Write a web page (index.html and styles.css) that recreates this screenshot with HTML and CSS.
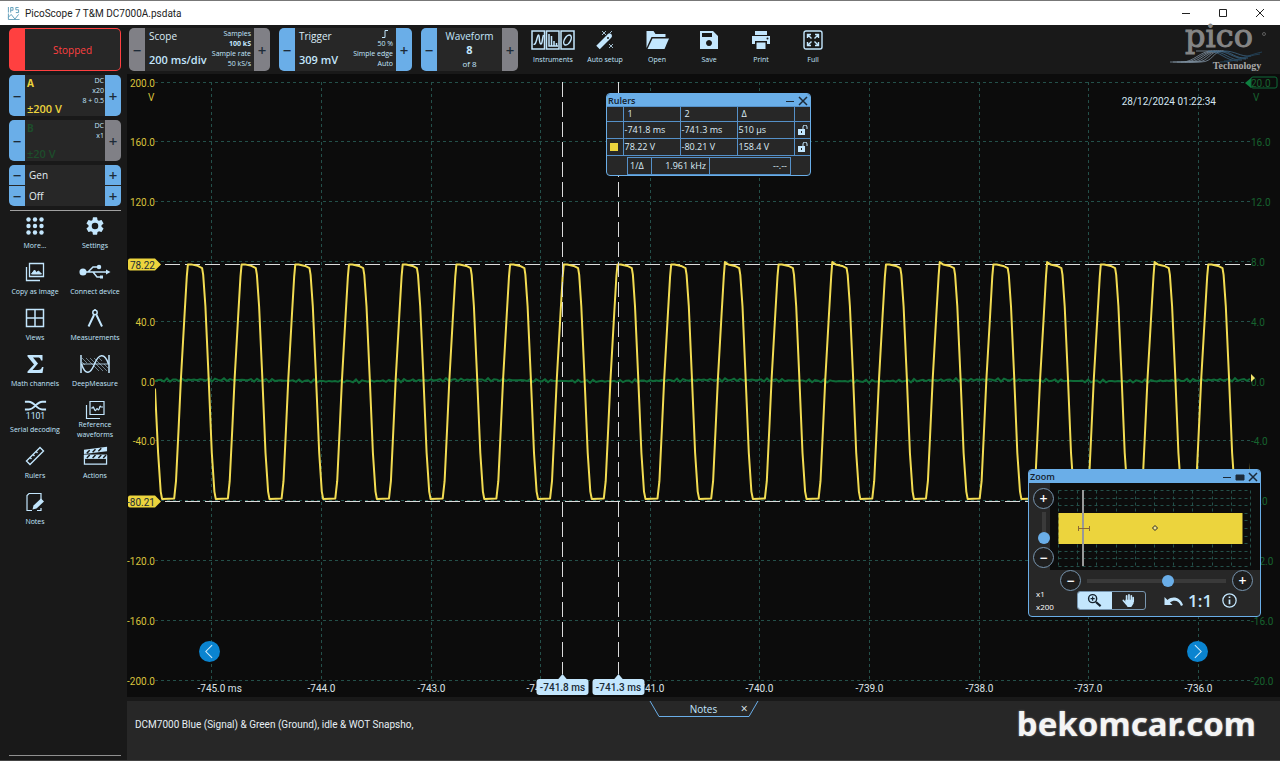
FILE: index.html
```html
<!DOCTYPE html>
<html lang="en">
  <head>
    <meta charset="UTF-8" />
    <title>PicoScope 7 T&amp;M DC7000A.psdata</title>
    <link rel="stylesheet" href="styles.css">
  </head>
  <body>
    <header class="titlebar">
      <svg class="app-icon" viewBox="0 0 14 14" fill="none" stroke="#5b9cb8">
        <path d="M1.500 0v6M4 6V.5h2.500v3H4M12.500.5H9.500v2.500h3V6h-3" />
        <path d="M1.500 7v6.500h12M1.500 11l3-3 4 5 4-5" />
      </svg>
      <h1>PicoScope 7 T&amp;M DC7000A.psdata</h1>
      <div class="window-buttons">
        <button aria-label="Minimize"><svg viewBox="0 0 10 10"><path d="M1 5.500h8" /></svg></button>
        <button aria-label="Maximize"><svg viewBox="0 0 10 10"><path d="M1.500 1.500h7v7h-7z" /></svg></button>
        <button aria-label="Close"><svg viewBox="0 0 10 10"><path d="M1 1l8 8M9 1L1 9" /></svg></button>
      </div>
    </header>

    <div class="app">
      <aside class="sidebar">
        <button class="stopped">Stopped</button>

        <section class="control channel-a">
          <button class="step" aria-label="Decrease A">−</button>
          <div class="control-body">
            <div class="control-left"><b>A</b><strong>±200 V</strong></div>
            <div class="control-right"><span>DC</span><span>x20</span><span>8 + 0.5</span></div>
          </div>
          <button class="step" aria-label="Increase A">+</button>
        </section>

        <section class="control channel-b">
          <button class="step" aria-label="Decrease B">−</button>
          <div class="control-body">
            <div class="control-left"><b>B</b><strong>±20 V</strong></div>
            <div class="control-right"><span>DC</span><span>x1</span></div>
          </div>
          <button class="step off" aria-label="Increase B">+</button>
        </section>

        <section class="generator">
          <button class="step" aria-label="Previous generator">−</button>
          <span>Gen</span>
          <button class="step" aria-label="Next generator">+</button>
          <button class="step" aria-label="Generator down">−</button>
          <span>Off</span>
          <button class="step" aria-label="Generator up">+</button>
        </section>

        <nav class="tools">
          <button>
            <svg viewBox="0 0 20 20" fill="currentColor"><circle cx="3.500" cy="3.500" r="2.200" /><circle cx="10" cy="3.500" r="2.200" /><circle cx="16.500" cy="3.500" r="2.200" /><circle cx="3.500" cy="10" r="2.200" /><circle cx="10" cy="10" r="2.200" /><circle cx="16.500" cy="10" r="2.200" /><circle cx="3.500" cy="16.500" r="2.200" /><circle cx="10" cy="16.500" r="2.200" /><circle cx="16.500" cy="16.500" r="2.200" /></svg>
            <span>More...</span>
          </button>
          <button>
            <svg viewBox="1 1 22 22" fill="currentColor"><path d="M19.140 12.940c.04-.3.06-.61.06-.94s-.02-.64-.07-.94l2.030-1.580a.49.49 0 0 0 .12-.61l-1.920-3.320a.49.49 0 0 0-.59-.22l-2.390.96a7 7 0 0 0-1.620-.94l-.36-2.540A.48.48 0 0 0 13.920 2.400h-3.840a.48.48 0 0 0-.47.41l-.36 2.540c-.59.24-1.130.57-1.620.94l-2.390-.96a.48.48 0 0 0-.59.22L2.740 8.870a.48.48 0 0 0 .12.61l2.030 1.580a6 6 0 0 0-.02 1.880l-2.030 1.580a.49.49 0 0 0-.12.61l1.920 3.320c.12.22.37.29.59.22l2.390-.96c.5.38 1.030.7 1.620.94l.36 2.540c.05.24.24.41.48.41h3.840c.24 0 .44-.17.47-.41l.36-2.540a7 7 0 0 0 1.620-.94l2.390.96c.22.08.47 0 .59-.22l1.920-3.320a.48.48 0 0 0-.12-.61zM12 15.600a3.600 3.600 0 1 1 0-7.200 3.600 3.600 0 0 1 0 7.200z" /></svg>
            <span>Settings</span>
          </button>
          <button>
            <svg viewBox="0 0 20 20" fill="none" stroke="currentColor"><path d="M4.500 1.500h14v13h-14zM1.500 5v13.500H15" stroke-width="1.300" /><path d="M6.500 12l3-4 2 2.500 2-1.500 3 3z" fill="currentColor" /></svg>
            <span>Copy as image</span>
          </button>
          <button>
            <svg class="wide" viewBox="0 0 32 20" fill="none" stroke="currentColor" stroke-width="1.500"><circle cx="4" cy="10" r="2.800" fill="currentColor" /><path d="M4 10h24M9 10l5-5h5M14 10l4 5h4" /><path d="M27 7.500l4.500 2.500-4.500 2.500z" fill="currentColor" stroke="none" /><circle cx="20" cy="5" r="1.500" fill="currentColor" /><path d="M21 13.500h3v3h-3z" fill="currentColor" stroke="none" /></svg>
            <span>Connect device</span>
          </button>
          <button>
            <svg viewBox="0 0 20 20" fill="none" stroke="currentColor" stroke-width="1.500"><path d="M1.500 1.500h17v17h-17zM10 1.500v17M1.500 10h17" /></svg>
            <span>Views</span>
          </button>
          <button>
            <svg viewBox="0 0 20 20" fill="none" stroke="currentColor" stroke-width="2"><circle cx="10" cy="4.500" r="2.200" stroke-width="1.500" /><path d="M10 1v1.500" stroke-width="1.500" /><path d="M9 7L3.500 18.500M11.500 7l5.500 11.500" /></svg>
            <span>Measurements</span>
          </button>
          <button>
            <svg viewBox="0 0 20 20" fill="currentColor"><path d="M2.500 1h15v5.500H16C15.500 4 14.500 3.500 12.500 3.500H8l5 6-5.500 6.500H13c2.500 0 3.500-1 4-3h1.500L17.500 19h-15v-1.500L9 10.500 2.500 2.500z" /></svg>
            <span>Math channels</span>
          </button>
          <button>
            <svg class="wide" viewBox="0 0 32 20" fill="none" stroke="currentColor"><path d="M2 1v18M30 1v18" stroke-width="1.500" /><path d="M2 10h28" stroke-width=".8" /><path d="M2.500 10c4 12 9 10 13 0s10-12 14 0" stroke-width="1.500" /><path d="M3 4l5 5M7 4l13 13M11 4l13 13M15 4l13 13M25 10l4 4M20 4l3 3M3 8l3 3" stroke-width=".5" /></svg>
            <span>DeepMeasure</span>
          </button>
          <button>
            <svg class="mid" viewBox="0 0 26 20" fill="none" stroke="currentColor"><path d="M2 1.500h4c6 0 8 8 14 8h4M2 9.500h4c6 0 8-8 14-8h4" stroke-width="2" /><text x="13" y="19" text-anchor="middle" class="bits">1101</text></svg>
            <span>Serial decoding</span>
          </button>
          <button>
            <svg viewBox="0 0 20 20" fill="none" stroke="currentColor"><path d="M5 1.500h14v13H5zM1.500 5v13.500H15" stroke-width="1.200" /><path d="M6 8h1.500C8.500 4 9.500 13 11 10s1.500 0 2.500 0S14.500 4 16 7h2" stroke-width="1.200" /></svg>
            <span>Reference waveforms</span>
          </button>
          <button>
            <svg viewBox="0 0 20 20" fill="none" stroke="currentColor" stroke-width="1.400"><path d="M1.500 15L15 1.500l3.500 3.500L5 18.500zM5 11.500l1.500 1.500M8 8.500l1.500 1.500M11 5.500l1.500 1.500" /></svg>
            <span>Rulers</span>
          </button>
          <button>
            <svg class="mid" viewBox="0 0 26 20"><path d="M1.500 9.500h23v9h-23z" fill="none" stroke="currentColor" stroke-width="1.300" /><path d="M1 3.500L25 .5v4.500L1 8z" fill="currentColor" /><path d="M4 7l3-3M10 6l3-3M16 5l3-3" stroke="#191919" stroke-width="1.500" /><path d="M1 8.500h24V13H1z" fill="currentColor" /><path d="M4 12l3-3M10 12l3-3M16 12l3-3M21 12l3-3" stroke="#191919" stroke-width="1.500" /></svg>
            <span>Actions</span>
          </button>
          <button>
            <svg viewBox="0 0 20 20" fill="none" stroke="currentColor"><path d="M16 8V1.500H4L2 3.500v15h5M12 18.500h4V16" stroke-width="1.200" /><path d="M7.500 17.500l1-4 7.500-7 3 3-7.500 7z" fill="currentColor" stroke="none" /></svg>
            <span>Notes</span>
          </button>
        </nav>
      </aside>

      <main class="main">
        <div class="toolbar">
          <section class="control scope">
            <button class="step off" aria-label="Decrease timebase">−</button>
            <div class="control-body">
              <div class="control-left"><span>Scope</span><strong>200 ms/div</strong></div>
              <div class="control-right"><span>Samples</span><b>100 kS</b><span>Sample rate</span><span>50 kS/s</span></div>
            </div>
            <button class="step off" aria-label="Increase timebase">+</button>
          </section>

          <section class="control trigger">
            <button class="step" aria-label="Decrease trigger">−</button>
            <div class="control-body">
              <div class="control-left"><span>Trigger</span><strong>309 mV</strong></div>
              <div class="control-right">
                <svg viewBox="0 0 8 8" width="8" height="8" fill="none" stroke="currentColor"><path d="M1 7.500h3v-7h3" /></svg>
                <span>50 %</span><span>Simple edge</span><span>Auto</span>
              </div>
            </div>
            <button class="step" aria-label="Increase trigger">+</button>
          </section>

          <section class="control waveform">
            <button class="step" aria-label="Previous waveform">−</button>
            <div class="control-body centered">
              <span>Waveform</span><strong>8</strong><small>of 8</small>
            </div>
            <button class="step off" aria-label="Next waveform">+</button>
          </section>

          <nav class="actions">
            <button>
              <svg class="instruments" viewBox="0 0 44 20" fill="none" stroke="currentColor" stroke-width="1.500"><path d="M1 1h12.500v18H1zM15.500 1H28v18H15.500zM30 1h13v18H30z" /><path d="M2.500 14c3 2 3.500-9 5-9s0 9 2.500 9c1.500 0 1-5 2.500-9M18 4v12h9M20.500 16V6M23 16v-5M25.500 16v-3" /><ellipse cx="36.500" cy="10" rx="3" ry="5.500" transform="rotate(30 36.500 10)" /></svg>
              <span>Instruments</span>
            </button>
            <button>
              <svg viewBox="0 0 20 20" fill="none" stroke="currentColor"><path d="M3 17.500L12.500 8" stroke-width="5" /><path d="M13 7.500l1.500-1.500" stroke-width="5" stroke-linecap="round" /><circle cx="13" cy="8" r="1" fill="#191919" stroke="none" /><path d="M7 1l4 4M11 1L7 5M14 14l4 4M18 14l-4 4M15 3l2-2" stroke-width=".8" /></svg>
              <span>Auto setup</span>
            </button>
            <button>
              <svg class="mid" viewBox="0 0 24 20" fill="currentColor"><path d="M1 18V1h7l2 3h10v3H6z" /><path d="M7 8.500h16.500L19 19H2z" /></svg>
              <span>Open</span>
            </button>
            <button>
              <svg viewBox="0 0 20 20" fill="currentColor" fill-rule="evenodd"><path d="M1 1h13l5 5v13H1zM3 3v4h10V3zM10 10a3 3 0 1 0 .01 0z" /></svg>
              <span>Save</span>
            </button>
            <button>
              <svg viewBox="0 0 20 20" fill="currentColor"><path d="M4 1h12v4H4zM1 6h18v8h-3v-3H4v3H1zM5.500 12.500h9V19h-9z" /><circle cx="16.500" cy="8.500" r="1" fill="#191919" /></svg>
              <span>Print</span>
            </button>
            <button>
              <svg viewBox="0 0 20 20" fill="none" stroke="currentColor" stroke-width="1.400"><rect x="1" y="1" width="18" height="18" rx="2" /><path d="M4.500 8V4.500H8M12 4.500h3.500V8M4.500 12v3.500H8M12 15.500h3.500V12M4.500 4.500l4 4M15.500 4.500l-4 4M4.500 15.500l4-4M15.500 15.500l-4-4" /></svg>
              <span>Full</span>
            </button>
          </nav>

          <svg class="logo" viewBox="0 0 100 46" role="img" aria-label="pico Technology">
            <g fill="none" stroke="#7d8fa0" stroke-width=".8">
              <path d="M2 37h12c12 0 18-11 30-11M5 37h12c12 0 18-11 30-11M9 37h12c12 0 16-11 28-11M13 37h12c12 0 14-11 26-11M17 37h12c12 0 12-11 24-11M21 37h12c12 0 12-11 22-11M28 26h28" />
              <path d="M40 26c12 0 18 10 30 10M44 26c12 0 18 10 30 9M48 26c12 0 18 8 30 8M52 26c12 0 14 8 28 7M56 26c12 0 16 6 27 5" stroke="#3c6484" />
              <path d="M56 36c14 0 24-6 38-9M52 37c16 0 26-6 40-8" stroke="#24465f" />
            </g>
            <text x="51" y="22" text-anchor="middle" class="logo-name">pico</text>
            <circle cx="96" cy="9" r="1.500" fill="none" stroke="#888" stroke-width=".6" />
            <text x="69" y="44" text-anchor="middle" class="logo-sub">Technology</text>
          </svg>
        </div>

        <div class="chart" id="chart">
          <svg id="plot" class="plot"></svg>
          <time class="stamp">28/12/2024 01:22:34</time>

          <button class="page-btn prev" aria-label="Previous"><svg viewBox="0 0 20 20"><path d="M12.500 4L6.500 10l6 6" /></svg></button>
          <button class="page-btn next" aria-label="Next"><svg viewBox="0 0 20 20"><path d="M7.500 4l6 6-6 6" /></svg></button>

          <section class="panel rulers">
            <header class="panel-title">
              <h2>Rulers</h2>
              <button aria-label="Minimize rulers"><svg viewBox="0 0 10 10"><path d="M1 5.500h8" /></svg></button>
              <button aria-label="Close rulers"><svg viewBox="0 0 10 10"><path d="M1 1l8 8M9 1L1 9" stroke-width="1.500" /></svg></button>
            </header>
            <table class="ruler-table">
              <colgroup><col class="c-icon"><col><col><col><col class="c-icon"></colgroup>
              <tr><td></td><th scope="col">1</th><th scope="col">2</th><th scope="col">Δ</th><td></td></tr>
              <tr>
                <td></td><td>-741.8 ms</td><td>-741.3 ms</td><td>510 µs</td>
                <td><svg class="lock" viewBox="0 0 10 10"><path d="M0 4h7v6H0z" fill="#c3e6fd" /><path d="M5 4V2a2 2 0 0 1 4 0v2" fill="none" stroke="#c3e6fd" /><path d="M3.500 6v2" stroke="#222" /></svg></td>
              </tr>
              <tr>
                <td><i class="swatch"></i></td><td>78.22 V</td><td>-80.21 V</td><td>158.4 V</td>
                <td><svg class="lock" viewBox="0 0 10 10"><path d="M0 4h7v6H0z" fill="#c3e6fd" /><path d="M5 4V2a2 2 0 0 1 4 0v2" fill="none" stroke="#c3e6fd" /><path d="M3.500 6v2" stroke="#222" /></svg></td>
              </tr>
            </table>
            <table class="freq-table">
              <colgroup><col class="f-name"><col class="f-value"><col></colgroup>
              <tr><th scope="row">1/Δ</th><td>1.961 kHz</td><td>--.--</td></tr>
            </table>
          </section>

          <section class="panel zoom">
            <header class="panel-title">
              <h2>Zoom</h2>
              <button aria-label="Minimize zoom"><svg viewBox="0 0 10 10"><path d="M1 5.500h8" /></svg></button>
              <button aria-label="Dock zoom"><svg viewBox="0 0 10 10"><path d="M1 3h8v5H1z" fill="#1c2a38" /></svg></button>
              <button aria-label="Close zoom"><svg viewBox="0 0 10 10"><path d="M1 1l8 8M9 1L1 9" stroke-width="1.500" /></svg></button>
            </header>
            <div class="zoom-top">
              <div class="zoom-vertical">
                <button class="round" aria-label="Zoom in vertically">+</button>
                <input class="slider-v" type="range" min="0" max="100" value="0" aria-label="Vertical zoom">
                <button class="round" aria-label="Zoom out vertically">−</button>
              </div>
              <svg class="overview" id="overview"></svg>
            </div>
            <div class="zoom-bottom">
              <div class="factors"><span>x1</span><span>x200</span></div>
              <div class="zoom-tools">
                <div class="zoom-horizontal">
                  <button class="round" aria-label="Zoom out horizontally">−</button>
                  <input class="slider-h" type="range" min="0" max="100" value="59" aria-label="Horizontal zoom">
                  <button class="round" aria-label="Zoom in horizontally">+</button>
                </div>
                <div class="zoom-modes">
                  <div class="segmented">
                    <button class="active" aria-label="Zoom tool"><svg viewBox="0 0 16 16" fill="none" stroke="#14202b" stroke-width="1.500"><circle cx="6" cy="6" r="4.300" /><path d="M6 3.800v4.400M3.800 6h4.400" stroke-width="1.200" /><path d="M9.500 9.500l5 4.500" stroke-width="2.200" /></svg></button>
                    <button aria-label="Pan tool"><svg viewBox="0 0 16 16" fill="none" stroke="#c3e6fd" stroke-width="1.800" stroke-linecap="round"><path d="M6 9V3M8.500 9V2M11 9V3M13 9V5M2.500 8l3 3.500" /><path d="M5.500 8h7v3l-2 3H7.500l-2-3z" fill="#c3e6fd" /></svg></button>
                  </div>
                  <button class="plain undo" aria-label="Undo zoom"><svg viewBox="0 0 20 14"><path d="M1 3v8h8L6.500 8.500c4-3 9-2 11 3.500l2-1C17 3.500 9.500 1.500 4 6z" fill="#c3e6fd" /></svg></button>
                  <button class="plain one">1:1</button>
                  <button class="plain info" aria-label="Information"><svg viewBox="0 0 14 14" fill="none" stroke="#c3e6fd"><circle cx="7" cy="7" r="6.200" stroke-width="1.200" /><path d="M7 6v4.500M7 3.200v1.500" stroke-width="1.600" /></svg></button>
                </div>
              </div>
            </div>
          </section>
        </div>

        <section class="notes">
          <div class="notes-tab">
            <svg viewBox="0 0 110 17" fill="none" stroke="#6aaee8"><path d="M1 0l9 15.500h90L109 0" /></svg>
            <h2>Notes</h2>
            <button aria-label="Close notes">×</button>
          </div>
          <p>DCM7000 Blue (Signal) &amp; Green (Ground), idle &amp; WOT Snapsho,</p>
          <a class="watermark" href="#">bekomcar.com</a>
        </section>
      </main>
    </div>
    <script src="script.js"></script>
  </body>
</html>
```
FILE: styles.css
```css
* {
  box-sizing: border-box;
}

body {
  margin: 0;
  height: 100vh;
  min-height: 640px;
  display: flex;
  flex-direction: column;
  background-color: #191919;
  color: #c3e6fd;
  font-family: "Open Sans", "Noto Sans", sans-serif;
  font-size: 10px;
  overflow: hidden;
}

button {
  font-family: inherit;
  color: inherit;
  border: none;
  padding: 0;
  background: none;
  cursor: pointer;
}

h1,
h2,
p {
  margin: 0;
  font-weight: normal;
}

/* title bar */
.titlebar {
  height: 25px;
  display: flex;
  align-items: center;
  padding: 0 2px 0 7px;
  background-color: white;
  border-top: 1px solid #777;
  color: #222;
}

.app-icon {
  width: 13px;
  height: 13px;
  margin-right: 5px;
}

.titlebar h1 {
  font-family: Roboto, sans-serif;
  font-size: 10px;
  flex: 1;
}

.window-buttons {
  display: flex;
}

.window-buttons button {
  width: 37px;
  height: 24px;
}

.window-buttons svg {
  width: 10px;
  height: 10px;
  fill: none;
  stroke: #222;
}

.app {
  flex: 1;
  display: flex;
  min-height: 0;
  border-bottom: 1px solid #444;
}

/* sidebar */
.sidebar {
  width: 127px;
  padding: 3px 6px 4px 9px;
  display: flex;
  flex-direction: column;
  gap: 4px;
}

.stopped {
  height: 43px;
  color: #ff4040;
  font-size: 10px;
  background-color: #272727;
  border: 1px solid #ff4040;
  border-left-width: 16px;
  border-radius: 5px;
}

.control {
  display: flex;
  background-color: #272727;
  border-radius: 5px;
  overflow: hidden;
}

.sidebar .control {
  height: 41px;
}

.step {
  width: 16px;
  flex: none;
  background-color: #6aaee8;
  color: #1d2b38;
  font-size: 15px;
  font-weight: 600;
  line-height: 20px;
}

.step.off {
  background-color: #808086;
}

.control-body {
  flex: 1;
  display: flex;
  justify-content: space-between;
}

.control-left {
  display: flex;
  flex-direction: column;
  justify-content: space-between;
  padding: 1px 0 0 2px;
  line-height: 14px;
}

.control-left strong {
  font-size: 11px;
  font-weight: 600;
}

.control-right {
  display: flex;
  flex-direction: column;
  align-items: flex-end;
  padding: 1px 1px 0 0;
  font-size: 7px;
  line-height: 10px;
}

.channel-a .control-left {
  color: #ecd43d;
}

.channel-b .control-left {
  color: #1d4d2b;
}

.generator {
  display: grid;
  grid-template-columns: 16px 1fr 16px;
  grid-auto-rows: 20px;
  row-gap: 1px;
  align-items: stretch;
  border-radius: 5px;
  overflow: hidden;
  background-color: #272727;
  color: #e4eef5;
}

.generator span {
  padding-left: 4px;
  line-height: 20px;
}

.tools {
  display: grid;
  grid-template-columns: 60px 60px;
  grid-auto-rows: 45px;
  row-gap: 1px;
  margin: 0 -4px;
  padding-top: 2px;
  position: relative;
  flex: 1;
  align-content: start;
}

.sidebar::after {
  content: "";
  border-top: 1px solid #909090;
}

.tools::before {
  content: "";
  position: absolute;
  top: 0;
  left: 5px;
  right: 4px;
  border-top: 1px solid #a0a0a0;
}

.tools button,
.actions button {
  display: flex;
  flex-direction: column;
  align-items: center;
  font-size: 7px;
  line-height: 10px;
}

.tools button {
  padding-top: 4px;
}

.tools svg,
.actions svg {
  height: 20px;
  width: 20px;
}

.tools svg.wide {
  width: 32px;
}

.tools svg.mid,
.actions svg.mid {
  width: 25px;
}

.tools span {
  height: 20px;
  max-width: 56px;
  display: flex;
  align-items: center;
  justify-content: center;
  white-space: normal;
}

.bits {
  font-family: Roboto, sans-serif;
  font-size: 9px;
  fill: currentColor;
  stroke: none;
}

/* toolbar */
.main {
  flex: 1;
  min-width: 0;
  display: flex;
  flex-direction: column;
}

.toolbar {
  height: 49px;
  display: flex;
  gap: 9px;
  padding: 0 12px 3px 2px;
}

.toolbar .control,
.actions {
  margin-top: 3px;
}

.toolbar .control-left {
  padding: 1px 0 4px 4px;
  color: #dcecf6;
}

.toolbar .control-left strong,
.centered strong {
  color: #c3e6fd;
}

.scope {
  width: 141px;
}

.trigger {
  width: 133px;
}

.waveform {
  width: 97px;
}

.toolbar .control-right {
  padding-right: 3px;
}

.scope .control-body {
  white-space: nowrap;
}

.toolbar .control-right svg {
  margin: 1px 4px 1px 0;
}

.centered {
  flex-direction: column;
  align-items: center;
  justify-content: center;
  line-height: 14px;
}

.centered strong {
  font-size: 11px;
}

.centered small {
  font-size: 8px;
}

.actions {
  display: flex;
  flex: 1;
}

.actions button {
  width: 52px;
  padding-top: 2px;
  gap: 5px;
}

.actions svg.instruments {
  width: 44px;
}

.logo {
  width: 100px;
  height: 46px;
  flex: none;
}

.logo-name {
  font-family: "DejaVu Serif", serif;
  font-size: 32px;
  fill: #858585;
  stroke: #858585;
}

.logo-sub {
  font-family: "Liberation Serif", serif;
  font-weight: bold;
  font-size: 10px;
  fill: #a8a8a8;
}

.logo text {
  line-height: 1;
}

.logo {
  overflow: visible;
}

/* chart */
.chart {
  position: relative;
  flex: 1;
  min-height: 0;
  background-color: #0c0c0c;
  font-family: Roboto, sans-serif;
}

.plot {
  display: block;
  width: 100%;
  height: 100%;
}

.plot text {
  font-size: 10px;
}

.grid {
  stroke: #24504a;
  stroke-dasharray: 3 3;
}

.label-a {
  fill: #d9c33c;
}

.label-b {
  fill: #17632f;
}

.label-x {
  fill: #dfe4e8;
}

.trace-a {
  fill: none;
  stroke: #f2dc52;
  stroke-width: 2;
  stroke-linejoin: round;
}

.trace-b {
  fill: none;
  stroke: #0e6b38;
  stroke-width: 2;
}

.ruler {
  stroke: #dcdcdc;
  stroke-dasharray: 15 5;
}

.flag-a {
  fill: #ecd43d;
}

.flag-x {
  fill: #c3e6fd;
}

.flag-b {
  fill: none;
  stroke: #0e6b38;
}

.flag-b-arrow {
  fill: #0e8040;
}

.flag-text {
  fill: #1a2a36;
}

.flag-time {
  font-weight: 500;
}

.stamp {
  position: absolute;
  top: 21px;
  right: 64px;
  font-size: 10px;
  line-height: 14px;
  color: #d3e6f2;
}

.page-btn {
  position: absolute;
  bottom: 35px;
  width: 21px;
  height: 21px;
  border-radius: 50%;
  background-color: #0a84d0;
}

.page-btn svg {
  display: block;
  width: 21px;
  height: 21px;
  fill: none;
  stroke: #d3ecfb;
}

.prev {
  left: 72px;
}

.next {
  right: 72px;
}

/* floating panels */
.panel {
  position: absolute;
  background-color: #272727;
  border: 1px solid #6aaee8;
  border-radius: 4px;
  overflow: hidden;
  font-family: "Open Sans", "Noto Sans", sans-serif;
}

.panel-title {
  height: 13px;
  display: flex;
  align-items: center;
  gap: 3px;
  padding: 0 2px 0 1px;
  background-color: #6aaee8;
  color: #14202b;
}

.panel-title h2 {
  flex: 1;
  font-size: 9px;
  font-weight: 600;
  line-height: 13px;
}

.panel-title button,
.panel-title svg {
  display: block;
  width: 10px;
  height: 10px;
  fill: none;
  stroke: #1c2a38;
}

.rulers {
  top: 19px;
  left: 479px;
  width: 205px;
  font-size: 9px;
  color: #dcecf6;
}

.rulers table {
  border-collapse: collapse;
  table-layout: fixed;
}

.ruler-table {
  width: 100%;
  margin-top: -1px;
}

.rulers td,
.rulers th {
  border: 1px solid #5590c8;
  padding: 0 0 0 1px;
  height: 17px;
  line-height: 14px;
  font-weight: normal;
  text-align: left;
  white-space: nowrap;
}

.rulers .ruler-table th {
  height: 15px;
  padding-left: 4px;
}

.rulers .ruler-table tr:first-child td {
  height: 15px;
}

.ruler-table tr > :first-child {
  border-left: none;
}

.ruler-table tr > :last-child {
  border-right: none;
}

.rulers .ruler-table td:last-child {
  padding-left: 3px;
}

.c-icon {
  width: 16px;
}

.swatch {
  display: block;
  width: 8px;
  height: 8px;
  margin-left: 2px;
  background-color: #ecd43d;
}

.lock {
  display: block;
  width: 10px;
  height: 10px;
}

.freq-table {
  width: 164px;
  margin: 1px 0 0 20px;
}

.rulers .freq-table th {
  padding-left: 2px;
}

.rulers .freq-table td {
  text-align: right;
  padding-right: 3px;
}

.f-name {
  width: 24px;
}

.f-value {
  width: 58px;
}

.zoom {
  right: 19px;
  bottom: 80px;
  width: 233px;
}

.zoom-top {
  display: flex;
}

.zoom-vertical {
  width: 21px;
  height: 87px;
  padding: 5px 0 2px 4px;
  display: flex;
  flex-direction: column;
  gap: 3px;
}

.round {
  width: 21px;
  height: 21px;
  flex: none;
  border: 1px solid #7896b0;
  border-radius: 50%;
  background-color: #1e1e1e;
  color: white;
  font-size: 14px;
  font-weight: 600;
  line-height: 16px;
}

.zoom-vertical .round {
  position: relative;
}

.overview {
  flex: 1;
  height: 87px;
  background-color: #0c0c0c;
}

input[type="range"] {
  appearance: none;
  background: none;
  margin: 0;
}

input::-webkit-slider-thumb {
  appearance: none;
  width: 12px;
  height: 12px;
  border-radius: 50%;
  background-color: #6aaee8;
}

.slider-v {
  writing-mode: vertical-lr;
  direction: rtl;
  width: 21px;
  flex: 1;
  min-height: 0;
}

.slider-v::-webkit-slider-runnable-track {
  width: 12px;
  background: linear-gradient(90deg, transparent 4px, #3a3a3a 4px 8px, transparent 8px);
}

.slider-h {
  flex: 1;
  min-width: 0;
}

.slider-h::-webkit-slider-runnable-track {
  height: 12px;
  background: linear-gradient(transparent 4px, #3a3a3a 4px 8px, transparent 8px);
}

.zoom-bottom {
  display: flex;
  height: 46px;
}

.factors {
  width: 31px;
  padding: 17px 0 0 7px;
  display: flex;
  flex-direction: column;
  font-size: 8px;
  line-height: 13px;
  color: white;
}

.zoom-tools {
  flex: 1;
  padding-right: 7px;
}

.zoom-horizontal {
  display: flex;
  gap: 6px;
  height: 21px;
}

.zoom-modes {
  display: flex;
  align-items: center;
  padding-left: 17px;
}

.segmented {
  display: flex;
  width: 69px;
  height: 19px;
  border: 1px solid #7896b0;
  border-radius: 3px;
  overflow: hidden;
}

.segmented button {
  flex: 1;
}

.segmented .active {
  background-color: #c3e6fd;
}

.segmented svg {
  display: block;
  width: 15px;
  height: 15px;
  margin: 0 auto;
}

.plain svg {
  display: block;
}

.undo {
  margin-left: 17px;
}

.undo svg {
  width: 21px;
  height: 14px;
}

.one {
  margin-left: 4px;
  font-size: 17px;
  font-weight: 600;
  line-height: 19px;
}

.info {
  margin-left: auto;
  margin-right: 16px;
}

.info svg {
  width: 15px;
  height: 15px;
}

/* notes */
.notes {
  position: relative;
  height: 59px;
  margin-top: 4px;
  display: flex;
  align-items: center;
  padding: 0 24px 0 8px;
  background-color: #272727;
  color: #e6eef4;
}

.notes p {
  flex: 1;
  padding-bottom: 12px;
  font-family: Roboto, sans-serif;
}

.notes-tab {
  position: absolute;
  top: 0;
  left: calc(50% - 55px);
  width: 110px;
  height: 17px;
  text-align: center;
}

.notes-tab svg {
  position: absolute;
  left: 0;
  width: 110px;
  height: 17px;
}

.notes-tab h2 {
  font-size: 10px;
  line-height: 17px;
  color: #c3e6fd;
}

.notes-tab button {
  position: absolute;
  top: 0;
  right: 11px;
  font-size: 12px;
  line-height: 16px;
}

.watermark {
  color: #f4f4f4;
  font-family: "Noto Sans", sans-serif;
  font-size: 33px;
  font-weight: bold;
  line-height: 40px;
  padding-bottom: 14px;
  text-decoration: none;
  text-shadow: 0 0 2px #999;
}
```
FILE: script.js
```js
const SVG_NS = "http://www.w3.org/2000/svg";

function add(parent, name, attrs, text) {
  const el = document.createElementNS(SVG_NS, name);
  for (const key in attrs) el.setAttribute(key, attrs[key]);
  if (text !== undefined) el.textContent = text;
  parent.appendChild(el);
  return el;
}

function line(parent, cls, x1, y1, x2, y2) {
  return add(parent, "line", { class: cls, x1, y1, x2, y2 });
}

const T_MIN = -745.515;
const T_MAX = -735.515;
const PERIOD = 0.49;
const FIRST_PEAK = -745.155;

// one cycle of channel A: [ms from peak, volts]
const CYCLE = [
  [-0.06, 78], [-0.03, 78], [0.03, 77], [0.07, 75.5], [0.08, 71],
  [0.1, 50], [0.13, 1], [0.158, -48], [0.182, -74], [0.195, -79],
  [0.305, -78.5], [0.322, -67], [0.345, -32], [0.365, 0], [0.4, 45], [0.42, 70],
];

function drawPlot() {
  const svg = document.getElementById("plot");
  svg.replaceChildren();
  const w = svg.clientWidth;
  const h = svg.clientHeight;
  const left = 28;
  const right = w - 29;
  const top = 8;
  const bottom = h - 17;

  const px = (t) => left + ((t - T_MIN) / (T_MAX - T_MIN)) * (right - left);
  const py = (v) => top + ((200 - v) / 400) * (bottom - top);

  // grid and axis labels
  for (let v = 200; v >= -200; v -= 40) {
    const y = Math.floor(py(v)) + 0.5;
    line(svg, "grid", left, y, right, y);
    if (v !== 80 && v !== -80) {
      add(svg, "text", { class: "label-a", x: left, y: y + 4, "text-anchor": "end" }, v.toFixed(1));
    }
    add(svg, "text", { class: "label-b", x: right, y: y + 4 }, (v / 10).toFixed(1));
  }
  for (let t = -745; t <= -736; t++) {
    const x = Math.round(px(t)) + 0.5;
    line(svg, "grid", x, top, x, bottom);
    const label = t.toFixed(1) + (t === -745 ? " ms" : "");
    add(svg, "text", { class: "label-x", x: x - 14, y: bottom + 12 }, label);
  }
  add(svg, "text", { class: "label-a", x: left - 7, y: top + 19 }, "V");
  add(svg, "text", { class: "label-b", x: right + 2, y: top + 19 }, "V");
  add(svg, "path", { class: "flag-b-arrow", d: `M${right - 6} ${top + 1}l6 -5v10z` });
  add(svg, "rect", { class: "flag-b", x: right, y: top - 5, width: 26, height: 11, rx: 2 });

  // channel B noise
  let d = "";
  for (let x = left; x <= right; x += 3) {
    const n = Math.sin(x * 1.7) * Math.sin(x * 0.37) * 1.5 + Math.sin(x * 0.9) - 0.5;
    d += (d ? "L" : "M") + x + " " + (py(0) + n).toFixed(1);
  }
  add(svg, "path", { class: "trace-b", d });

  // horizontal rulers
  const yTop = Math.round(py(78.22)) + 0.5;
  const yBottom = Math.round(py(-80.21)) + 0.5;
  line(svg, "ruler", left + 10, yTop, right, yTop);
  line(svg, "ruler", left + 10, yBottom, right, yBottom);

  // channel A
  const clip = add(svg, "clipPath", { id: "plot-area" });
  add(clip, "rect", { x: left, y: top, width: right - left - 1, height: bottom - top });
  const points = [px(T_MIN) + "," + py(-5)];
  for (let i = -1; i < 21; i++) {
    CYCLE.forEach(([dt, v], j) => {
      const t = FIRST_PEAK + i * PERIOD + dt;
      if (t < T_MIN + 0.01) return;
      const bump = j === 0 && i > 9 && i % 2 === 0 ? 1.5 : 0;
      points.push(px(t).toFixed(1) + "," + py(v + bump).toFixed(1));
    });
  }
  add(svg, "polyline", { class: "trace-a", points: points.join(" "), "clip-path": "url(#plot-area)" });
  add(svg, "path", { fill: "#f2e36a", d: `M${right} ${py(0) - 7}l4 4l-4 4z` });

  // value flags on the left axis
  [[yTop, "78.22"], [yBottom, "-80.21"]].forEach(([y, text]) => {
    add(svg, "path", { class: "flag-a", d: `M3 ${y - 6}H28l6 6l-6 6H3q-2 0 -2 -2v-8q0 -2 2 -2z` });
    add(svg, "text", { class: "flag-text", x: 28, y: y + 4, "text-anchor": "end" }, text);
  });

  // time rulers
  [[-741.805, "-741.8 ms"], [-741.295, "-741.3 ms"]].forEach(([t, text]) => {
    const x = Math.round(px(t)) + 0.5;
    line(svg, "ruler", x, top, x, bottom - 6);
    add(svg, "path", { class: "flag-x", d: `M${x - 5} ${bottom}l5 -6l5 6z` });
    add(svg, "rect", { class: "flag-x", x: x - 26, y: bottom - 1, width: 52, height: 16, rx: 3 });
    add(svg, "text", { class: "flag-text flag-time", x, y: bottom + 11, "text-anchor": "middle" }, text);
  });
}

function drawOverview() {
  const svg = document.getElementById("overview");
  svg.replaceChildren();
  const w = svg.clientWidth;
  const left = 8.5;
  const right = w - 9.5;
  for (let i = 0; i <= 10; i++) {
    const x = left + Math.round((i * (right - left)) / 10);
    const y = 7.5 + Math.round(i * 7.6);
    line(svg, "grid", x, 7.5, x, 83.5);
    line(svg, "grid", left, y, right, y);
  }
  add(svg, "rect", { x: left, y: 30, width: right - left - 8, height: 31, fill: "#ecd43d" });
  add(svg, "path", { d: "M33 7v76", stroke: "#999", "stroke-width": 2 });
  add(svg, "path", { d: "M28.500 43v5M39.500 43v5M28.500 45.500h11", stroke: "#8b6a34" });
  add(svg, "path", { d: "M105 42.500l2.500 2.500l-2.500 2.500l-2.500 -2.500z", stroke: "#222", fill: "#f3e694" });
}

function draw() {
  drawPlot();
  drawOverview();
}

draw();
window.addEventListener("resize", draw);
```
